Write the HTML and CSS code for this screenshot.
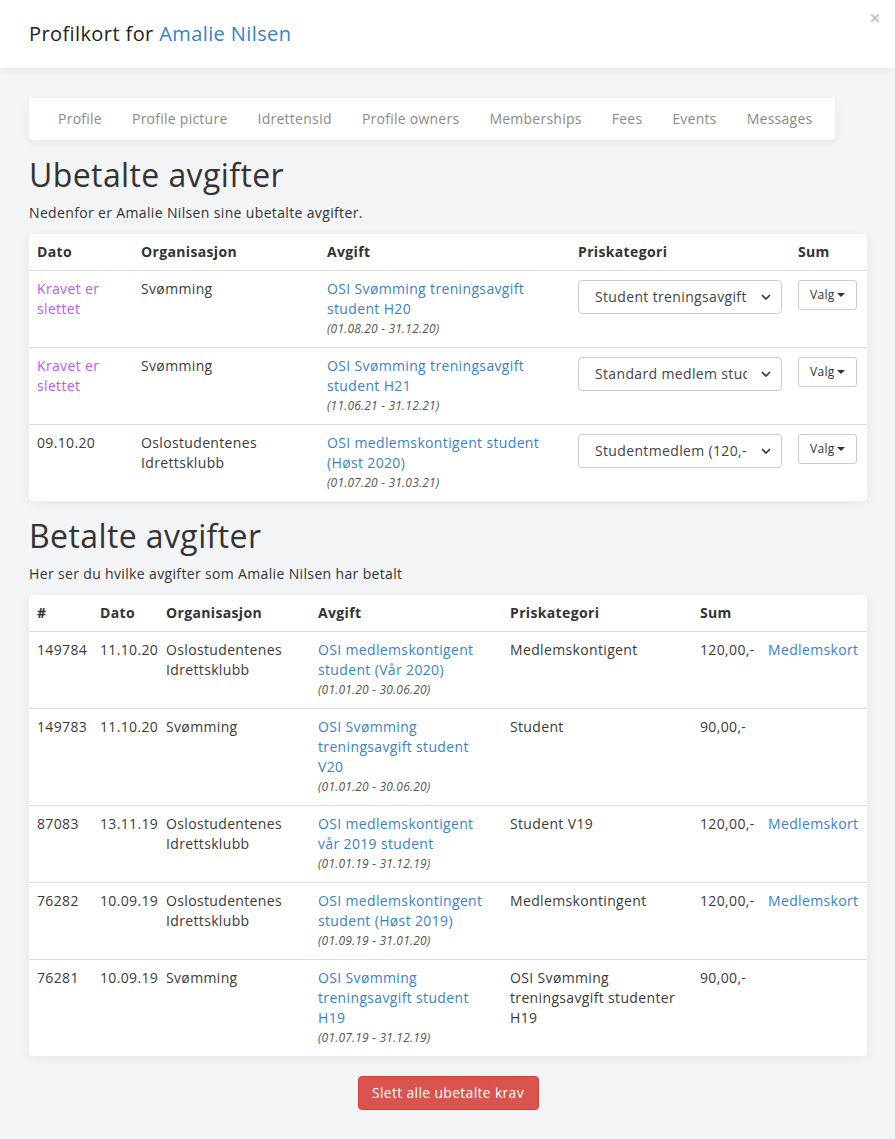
FILE: index.html
```html
<!DOCTYPE html>
<html lang="no">
<head>
<meta charset="utf-8">
<title>Profilkort for Amalie Nilsen</title>
<link rel="stylesheet" href="styles.css">
</head>
<body>
<header class="modal-header">
  <h4 class="modal-title">Profilkort for <a href="#" class="link">Amalie Nilsen</a></h4>
  <span class="close">×</span>
</header>
<main class="modal-body">
  <nav class="tabs">
    <a href="#">Profile</a>
    <a href="#">Profile picture</a>
    <a href="#">IdrettensId</a>
    <a href="#">Profile owners</a>
    <a href="#">Memberships</a>
    <a href="#">Fees</a>
    <a href="#">Events</a>
    <a href="#">Messages</a>
  </nav>

  <h2 class="section-title">Ubetalte avgifter</h2>
  <p class="lead-text">Nedenfor er Amalie Nilsen sine ubetalte avgifter.</p>
  <div class="card">
    <table class="table t1">
      <thead>
        <tr><th class="c-dato">Dato</th><th class="c-org">Organisasjon</th><th class="c-avg">Avgift</th><th class="c-pris">Priskategori</th><th class="c-sum">Sum</th></tr>
      </thead>
      <tbody>
        <tr>
          <td><span class="deleted">Kravet er slettet</span></td>
          <td>Svømming</td>
          <td><a href="#" class="link">OSI Svømming treningsavgift student H20</a><em class="period">(01.08.20 - 31.12.20)</em></td>
          <td><div class="select"><span>Student treningsavgift</span><svg class="chev" viewBox="0 0 10 6" width="10" height="6"><path d="M1 1l4 4 4-4" fill="none" stroke="#333" stroke-width="1.6"/></svg></div></td>
          <td><button class="btn-valg">Valg<span class="caret"></span></button></td>
        </tr>
        <tr>
          <td><span class="deleted">Kravet er slettet</span></td>
          <td>Svømming</td>
          <td><a href="#" class="link">OSI Svømming treningsavgift student H21</a><em class="period">(11.06.21 - 31.12.21)</em></td>
          <td><div class="select"><span>Standard medlem student</span><svg class="chev" viewBox="0 0 10 6" width="10" height="6"><path d="M1 1l4 4 4-4" fill="none" stroke="#333" stroke-width="1.6"/></svg></div></td>
          <td><button class="btn-valg">Valg<span class="caret"></span></button></td>
        </tr>
        <tr>
          <td>09.10.20</td>
          <td>Oslostudentenes Idrettsklubb</td>
          <td><a href="#" class="link">OSI medlemskontigent student (Høst 2020)</a><em class="period">(01.07.20 - 31.03.21)</em></td>
          <td><div class="select"><span>Studentmedlem (120,-)</span><svg class="chev" viewBox="0 0 10 6" width="10" height="6"><path d="M1 1l4 4 4-4" fill="none" stroke="#333" stroke-width="1.6"/></svg></div></td>
          <td><button class="btn-valg">Valg<span class="caret"></span></button></td>
        </tr>
      </tbody>
    </table>
  </div>

  <h2 class="section-title">Betalte avgifter</h2>
  <p class="lead-text">Her ser du hvilke avgifter som Amalie Nilsen har betalt</p>
  <div class="card">
    <table class="table t2">
      <thead>
        <tr><th class="d-nr">#</th><th class="d-dato">Dato</th><th class="d-org">Organisasjon</th><th class="d-avg">Avgift</th><th class="d-pris">Priskategori</th><th class="d-sum">Sum</th><th class="d-card"></th></tr>
      </thead>
      <tbody>
        <tr>
          <td>149784</td><td>11.10.20</td><td>Oslostudentenes Idrettsklubb</td>
          <td><a href="#" class="link">OSI medlemskontigent student (Vår 2020)</a><em class="period">(01.01.20 - 30.06.20)</em></td>
          <td>Medlemskontigent</td><td>120,00,-</td><td><a href="#" class="link">Medlemskort</a></td>
        </tr>
        <tr>
          <td>149783</td><td>11.10.20</td><td>Svømming</td>
          <td><a href="#" class="link">OSI Svømming treningsavgift student V20</a><em class="period">(01.01.20 - 30.06.20)</em></td>
          <td>Student</td><td>90,00,-</td><td></td>
        </tr>
        <tr>
          <td>87083</td><td>13.11.19</td><td>Oslostudentenes Idrettsklubb</td>
          <td><a href="#" class="link">OSI medlemskontigent vår 2019 student</a><em class="period">(01.01.19 - 31.12.19)</em></td>
          <td>Student V19</td><td>120,00,-</td><td><a href="#" class="link">Medlemskort</a></td>
        </tr>
        <tr>
          <td>76282</td><td>10.09.19</td><td>Oslostudentenes Idrettsklubb</td>
          <td><a href="#" class="link">OSI medlemskontingent student (Høst 2019)</a><em class="period">(01.09.19 - 31.01.20)</em></td>
          <td>Medlemskontingent</td><td>120,00,-</td><td><a href="#" class="link">Medlemskort</a></td>
        </tr>
        <tr>
          <td>76281</td><td>10.09.19</td><td>Svømming</td>
          <td><a href="#" class="link">OSI Svømming treningsavgift student H19</a><em class="period">(01.07.19 - 31.12.19)</em></td>
          <td>OSI Svømming treningsavgift studenter H19</td><td>90,00,-</td><td></td>
        </tr>
      </tbody>
    </table>
  </div>

  <div class="actions">
    <button class="btn-danger">Slett alle ubetalte krav</button>
  </div>
</main>
</body>
</html>
```

FILE: styles.css
```css
* { box-sizing: border-box; }
html, body { margin: 0; padding: 0; }
body {
  font-family: "Open Sans", "Noto Sans", sans-serif;
  font-size: 14px;
  line-height: 20px;
  letter-spacing: 0.35px;
  color: #3a3a3a;
  background: #f3f4f6;
  width: 895px;
  min-height: 1139px;
}
a { text-decoration: none; }
.link { color: #3a82c4; }

.modal-header {
  position: relative;
  background: #fff;
  height: 68px;
  padding: 0 29px;
  display: flex;
  align-items: center;
  box-shadow: 0 2px 8px rgba(0,0,0,0.06);
}
.modal-title {
  margin: 0;
  font-size: 20px;
  font-weight: 400;
  color: #222;
  line-height: 28px;
  letter-spacing: 0.4px;
}
.close {
  position: absolute;
  right: 14px;
  top: 8px;
  font-size: 20px;
  font-weight: 700;
  color: #c8c8c8;
}

.modal-body {
  padding: 30px 28px 30px 29px;
}
.tabs {
  display: flex;
  width: 806px;
  height: 42px;
  align-items: center;
  background: #fff;
  border-radius: 4px;
  box-shadow: 0 2px 10px rgba(0,0,0,0.06);
  padding: 0 14px;
}
.tabs a {
  flex: none;
  white-space: nowrap;
  color: #8a8a8a;
  padding: 0 15px;
  font-size: 14px;
  letter-spacing: 0.25px;
}

.section-title {
  margin: 15px 0 0;
  font-size: 32px;
  font-weight: 400;
  line-height: 40px;
  letter-spacing: 0.4px;
  color: #333;
}
.lead-text {
  margin: 8px 0 11px;
  font-size: 14px;
  line-height: 20px;
  color: #333;
}
.card {
  width: 838px;
  background: #fff;
  border-radius: 4px;
  box-shadow: 0 2px 12px rgba(0,0,0,0.06);
  overflow: hidden;
}
.table {
  width: 100%;
  border-collapse: collapse;
  table-layout: fixed;
}
.table th {
  text-align: left;
  font-weight: 700;
  padding: 8px 8px;
  line-height: 20px;
  border-bottom: 1px solid #ddd;
  color: #333;
}
.table td {
  vertical-align: top;
  padding: 8px 8px;
  border-top: 1px solid #ddd;
}
.table tbody tr:first-child td { border-top: none; }
.table a.link { display: block; }
.period {
  display: block;
  font-size: 12px;
  line-height: 20px;
  letter-spacing: 0.2px;
  color: #555;
}
.deleted { color: #c158f4; }

.c-dato { width: 104px; }
.c-org { width: 186px; }
.c-avg { width: 251px; }
.c-pris { width: 220px; }
.c-sum { width: 77px; }

.d-nr { width: 63px; }
.d-dato { width: 66px; }
.d-org { width: 152px; }
.d-avg { width: 192px; }
.d-pris { width: 190px; }
.d-sum { width: 68px; }
.d-card { width: 107px; }

.select {
  display: flex;
  align-items: center;
  justify-content: space-between;
  width: 204px;
  height: 34px;
  margin-top: 1px;
  border: 1px solid #ccc;
  border-radius: 4px;
  padding: 0 10px 0 16px;
  color: #444;
  background: #fff;
}
.select span {
  white-space: nowrap;
  overflow: hidden;
  width: 152px;
}
.chev { flex: none; }

.btn-valg {
  display: inline-flex;
  align-items: center;
  font-family: inherit;
  font-size: 12px;
  line-height: 16px;
  letter-spacing: 0.3px;
  color: #333;
  background: #fff;
  border: 1px solid #ccc;
  border-radius: 3px;
  padding: 6px 11px;
  height: 30px;
  margin-top: 1px;
}
.caret {
  display: inline-block;
  width: 0;
  height: 0;
  margin-left: 2px;
  border-top: 4px solid #333;
  border-left: 4px solid transparent;
  border-right: 4px solid transparent;
}

.actions {
  display: flex;
  justify-content: center;
  margin-top: 20px;
}
.btn-danger {
  font-family: inherit;
  font-size: 14px;
  line-height: 20px;
  letter-spacing: 0.3px;
  color: #fff;
  background: #d9534f;
  border: 1px solid #d43f3a;
  border-radius: 4px;
  padding: 6px 12px;
  width: 181px;
  height: 34px;
}
```
